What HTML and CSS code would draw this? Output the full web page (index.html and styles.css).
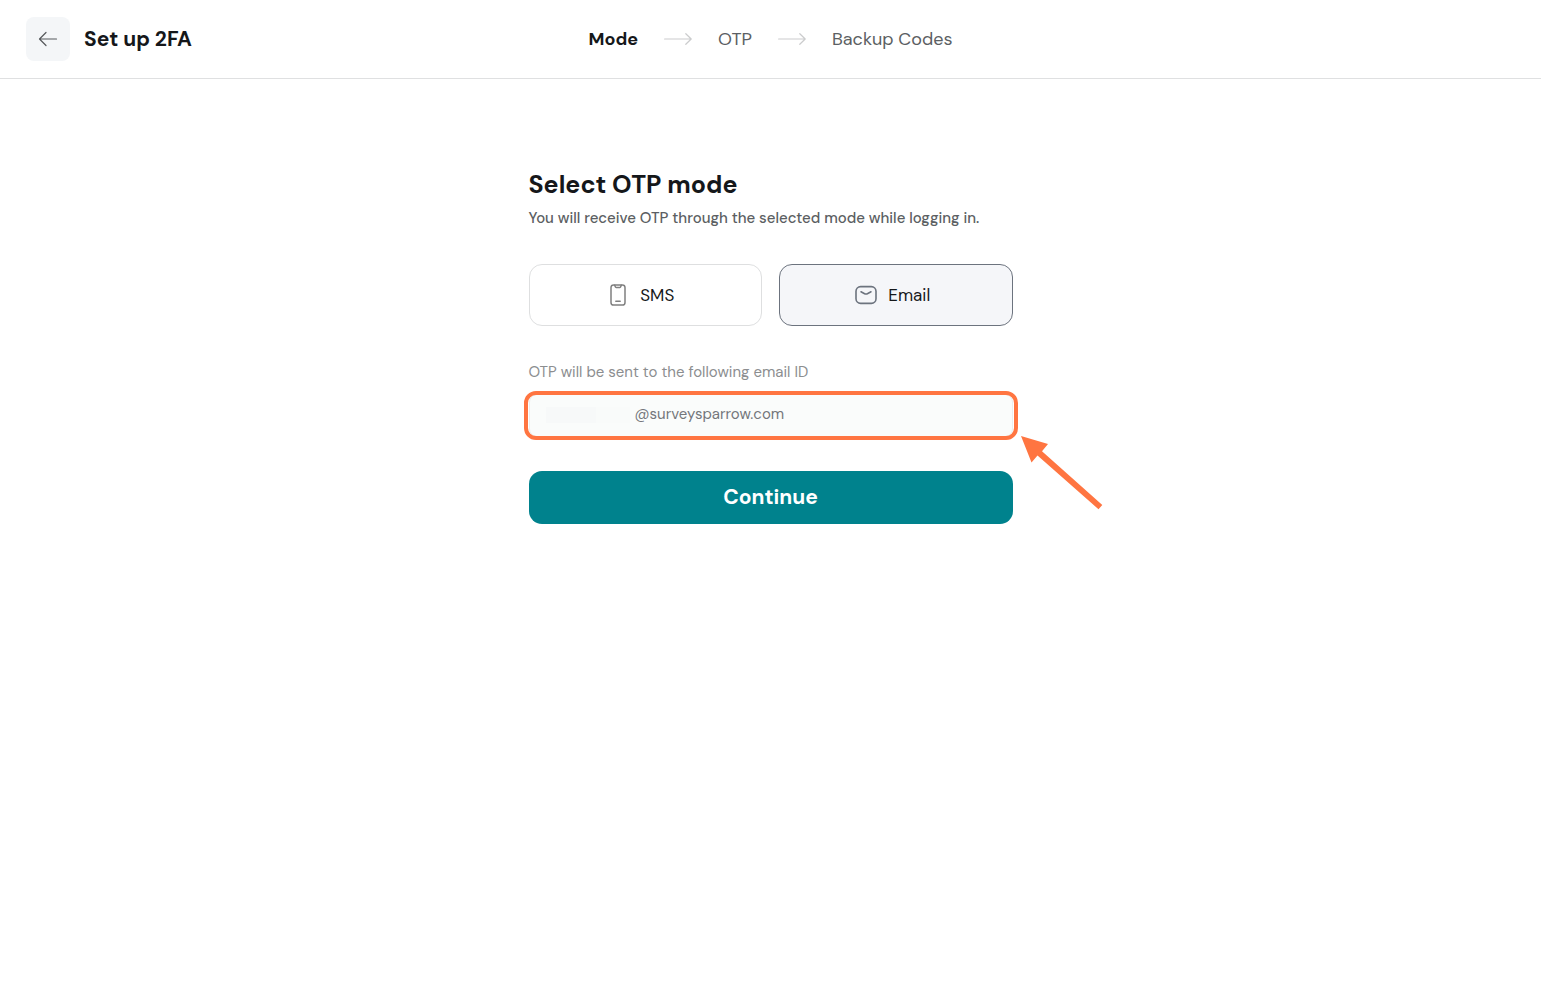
FILE: index.html
```html
<!DOCTYPE html>
<html lang="en">
<head>
<meta charset="utf-8">
<meta name="viewport" content="width=device-width, initial-scale=1">
<title>Set up 2FA</title>
<link rel="stylesheet" href="styles.css">
</head>
<body>
<header class="topbar">
  <div class="topbar-start">
    <button class="back" type="button" aria-label="Back">
      <svg width="20" height="16" viewBox="0 0 20 16" fill="none" stroke="currentColor" stroke-width="1.2" stroke-linecap="round" stroke-linejoin="round"><path d="M18.5 8H1.5M8 1.5 1.5 8 8 14.5"/></svg>
    </button>
    <h1 class="title">Set up 2FA</h1>
  </div>
  <ol class="steps">
    <li class="step step-current" aria-current="step">Mode</li>
    <li class="step-arrow" aria-hidden="true"><svg width="28" height="12" viewBox="0 0 28 12" fill="none" stroke="currentColor" stroke-width="1.2" stroke-linecap="round" stroke-linejoin="round"><path d="M.6 6H27M21.8.7 27.2 6l-5.4 5.3"/></svg></li>
    <li class="step">OTP</li>
    <li class="step-arrow" aria-hidden="true"><svg width="28" height="12" viewBox="0 0 28 12" fill="none" stroke="currentColor" stroke-width="1.2" stroke-linecap="round" stroke-linejoin="round"><path d="M.6 6H27M21.8.7 27.2 6l-5.4 5.3"/></svg></li>
    <li class="step">Backup Codes</li>
  </ol>
</header>
<main class="content">
  <form class="panel">
    <h2 class="heading">Select OTP mode</h2>
    <p class="lead">You will receive OTP through the selected mode while logging in.</p>
    <div class="modes">
      <button class="mode mode-sms" type="button" aria-pressed="false">
        <svg width="16" height="22" viewBox="0 0 16 22" fill="none" stroke="currentColor" stroke-width="1.5" stroke-linecap="round" stroke-linejoin="round"><rect x="1" y="1" width="14" height="20" rx="2.6"/><path d="M4.7 1.2 5.3 2.8q.2.6.8.6h3.8q.6 0 .8-.6l.6-1.6M5.8 17.2h4.4"/></svg>
        SMS
      </button>
      <button class="mode mode-selected" type="button" aria-pressed="true">
        <svg width="22" height="20" viewBox="0 0 22 20" fill="none" stroke="currentColor" stroke-width="1.6" stroke-linecap="round" stroke-linejoin="round"><rect x="1" y="1.6" width="20" height="16.8" rx="4.6"/><path d="M6 6.8l3.6 1.9q1.4.7 2.8 0L16 6.8"/></svg>
        Email
      </button>
    </div>
    <label class="field-label" for="email">OTP will be sent to the following email ID</label>
    <div class="field">
      <input class="field-input" id="email" type="text" value="@surveysparrow.com" readonly>
      <span class="field-mask"></span>
      <span class="highlight"></span>
      <svg class="pointer" width="84" height="74" viewBox="0 0 84 74" fill="#ff7541"><path d="M1 0 28 8 22 15.2 82.3 69 78.5 73.3 17.5 19.5 11.5 26.5z"/></svg>
    </div>
    <button class="submit" type="submit">Continue</button>
  </form>
</main>
</body>
</html>
```
FILE: styles.css
```css
* {
  box-sizing: border-box;
}

body {
  margin: 0;
  background: #fff;
  color: #15171a;
  font-family: "DM Sans", Inter, sans-serif;
}

button,
input {
  font-family: inherit;
}

h1,
h2,
p,
ol {
  margin: 0;
  padding: 0;
}

.topbar {
  display: grid;
  grid-template-columns: 1fr auto 1fr;
  align-items: center;
  padding: 17px 26px;
  border-bottom: 1px solid #dfe0e1;
}

.topbar-start {
  display: flex;
  align-items: center;
  gap: 14px;
}

.back {
  display: grid;
  place-items: center;
  width: 44px;
  height: 44px;
  padding: 0;
  border: 0;
  border-radius: 8px;
  background: #f4f6f8;
  color: #55585c;
}

.title {
  font-size: 21px;
  line-height: 28px;
  font-weight: 700;
}

.steps {
  display: flex;
  align-items: center;
  gap: 26px;
  list-style: none;
}

.step {
  color: #5c5f63;
  font-size: 18px;
  line-height: 24px;
}

.step-current {
  color: #15171a;
  font-weight: 700;
}

.step-arrow {
  display: flex;
  color: #cbcccd;
}

.content {
  padding: 90px 24px 24px;
}

.panel {
  display: flex;
  flex-direction: column;
  max-width: 484px;
  margin: 0 auto;
}

.heading {
  font-size: 25px;
  line-height: 32px;
  font-weight: 700;
}

.lead {
  margin-top: 7px;
  color: #5c5f63;
  font-size: 15px;
  line-height: 20px;
  font-weight: 500;
}

.modes {
  display: grid;
  grid-template-columns: 1fr 1fr;
  gap: 17px;
  margin-top: 36px;
}

.mode {
  display: flex;
  align-items: center;
  justify-content: center;
  gap: 11px;
  height: 62px;
  padding: 0 6px 0 0;
  border: 1px solid #dedfe0;
  border-radius: 13px;
  background: #fff;
  color: #15171a;
  font-size: 17px;
}

.mode svg {
  color: #6c737e;
}

.mode-sms {
  gap: 14px;
}

.mode-sms svg {
  color: #808080;
}

.mode-selected {
  border-color: #6c737e;
  background: #f5f6f9;
}

.field-label {
  margin-top: 36px;
  color: #8c8e90;
  font-size: 15px;
  line-height: 20px;
}

.field {
  position: relative;
  margin-top: 12px;
}

.field-input {
  display: block;
  width: 100%;
  height: 43px;
  padding: 0 16px 3px 105px;
  border: 1px solid #eceeee;
  border-radius: 8px;
  background: #fafcfb;
  color: #74777b;
  font-size: 15px;
  outline: 0;
}

.field-mask {
  position: absolute;
  top: 13px;
  left: 17px;
  width: 84px;
  height: 16px;
  background: linear-gradient(90deg, #f7f9f9 60%, #f9fbfa 60%);
}

.highlight {
  position: absolute;
  inset: -3px -5px;
  border: 4px solid #ff7541;
  border-radius: 12px;
  pointer-events: none;
}

.pointer {
  position: absolute;
  top: 42px;
  left: calc(100% + 7px);
}

.submit {
  height: 53px;
  margin-top: 34px;
  padding: 0 0 2px;
  border: 0;
  border-radius: 13px;
  background: #00828d;
  color: #fff;
  font-size: 21px;
  font-weight: 700;
}
```
